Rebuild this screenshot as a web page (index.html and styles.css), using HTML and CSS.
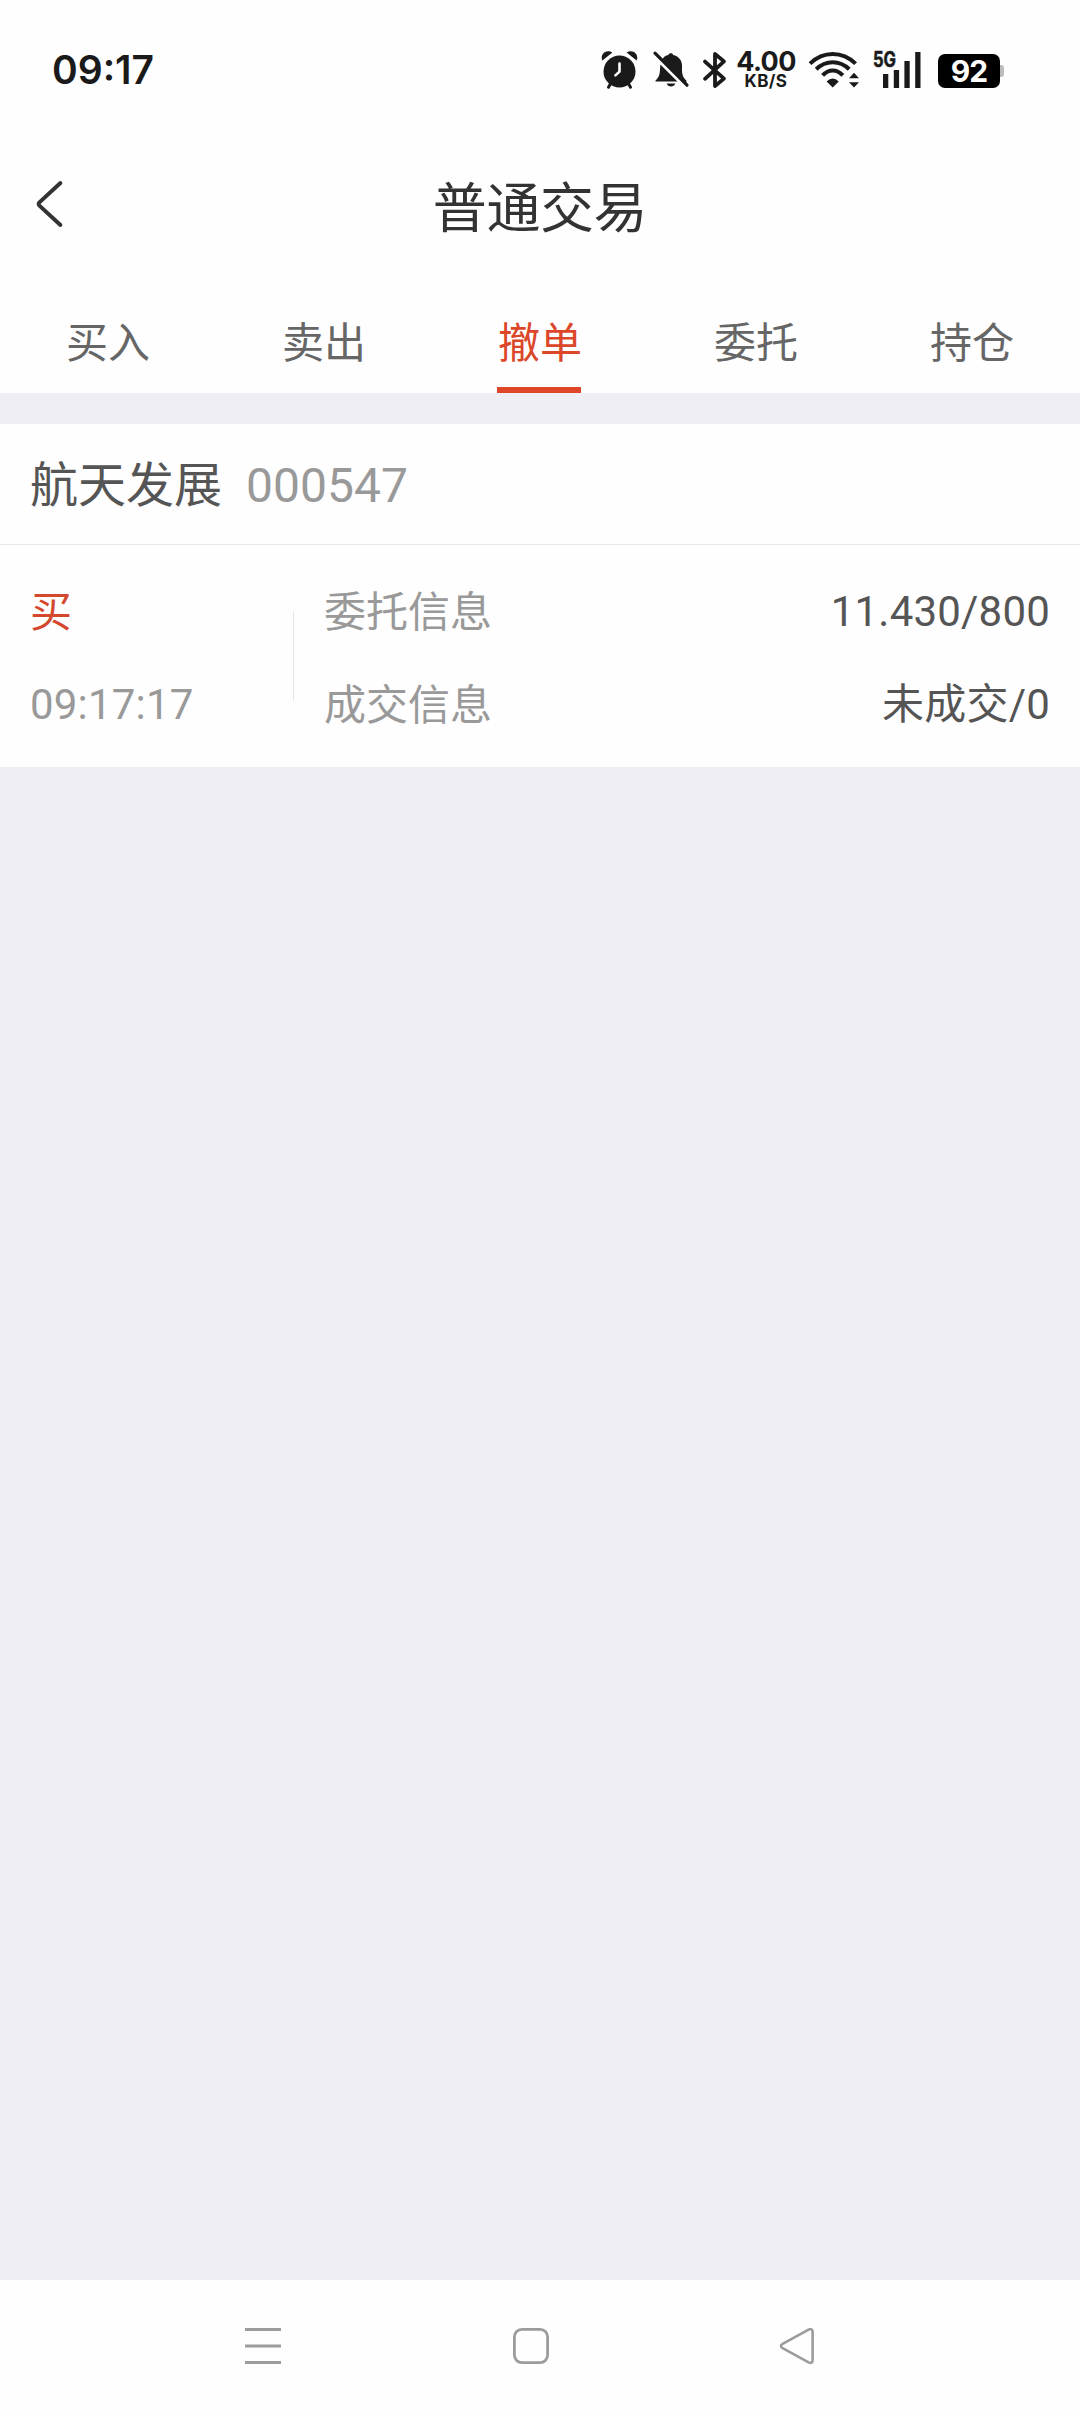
FILE: index.html
```html
<!DOCTYPE html>
<html lang="zh-CN">
<head>
<meta charset="utf-8">
<title>普通交易</title>
<link rel="stylesheet" href="styles.css">
</head>
<body>
<div class="screen">
  <div class="status">
    <div class="clock">09:17</div>
    <div class="indicators">
      <svg class="alarm" width="40" height="40" viewBox="0 0 40 40">
        <path d="M2.4 10.6C-.4 4.6 6-1.6 12.4 2.6ZM36.6 10.6C39.4 4.6 33-1.6 26.6 2.6Z" fill="#1a1a1a"/>
        <path d="M8.5 37.2 12 31M30.5 37.2 27 31" stroke="#1a1a1a" stroke-width="3" stroke-linecap="round"/>
        <circle cx="19.5" cy="21.5" r="16" fill="#1a1a1a"/>
        <path d="M19.5 13.6V21.6L15.4 25.4" fill="none" stroke="#fff" stroke-width="2.6" stroke-linecap="round" stroke-linejoin="round"/>
      </svg>
      <svg class="bell" width="42" height="40" viewBox="0 0 42 40">
        <path d="M14.6 6.6C15.8 5.8 17 5.3 18.4 5C18.8 2.7 22.8 2.7 23.2 5C28.4 6.2 32 10 32 15.5V19.5C32 25 33.2 27.5 36.4 30.6V33L12.4 9ZM10.4 14.6 27.4 31.6H5.5V30.6C8.6 27.5 9.8 25 10 19.5ZM16.6 33.6H25.4C24 37.6 18 37.6 16.6 33.6Z" fill="#1a1a1a"/>
        <path d="M5 3.2 37 35.2" stroke="#1a1a1a" stroke-width="3.2" stroke-linecap="round"/>
      </svg>
      <svg class="bluetooth" width="30" height="40" viewBox="0 0 30 40">
        <path d="M5 11.6 24 28.6 15 36V4L24 11.4 5 28.8" fill="none" stroke="#1a1a1a" stroke-width="3.8" stroke-linecap="round" stroke-linejoin="round"/>
      </svg>
      <div class="speed"><span class="rate">4.00</span><span class="unit">KB/S</span></div>
      <svg class="wifi" width="56" height="40" viewBox="0 0 56 40">
        <path d="M4 13.6Q14 4 26.7 4T49.6 13.6M10.2 19.2Q17.4 12.2 26.7 12.2T43.2 19.2M16.6 25.4Q21 20.4 26.7 20.4T36.8 25.4" fill="none" stroke="#1a1a1a" stroke-width="4"/>
        <path d="M20.6 31.4Q26.7 25.6 32.8 31.4L26.7 37.4ZM48 22.8 53 28.2H43ZM48 37.4 53 32.2H43Z" fill="#1a1a1a"/>
      </svg>
      <svg class="signal" width="50" height="40" viewBox="0 0 50 40">
        <text class="network" x="1" y="17" textLength="23" lengthAdjust="spacingAndGlyphs">5G</text>
        <path d="M11 24h5.3v14H11zM21.8 20h5.3v18h-5.3zM32.4 11h5.3v27h-5.3zM43.2 2h5.3v36h-5.3z" fill="#1a1a1a"/>
      </svg>
      <div class="battery"><span class="level">92</span><span class="nub"></span></div>
    </div>
  </div>

  <header class="titlebar">
    <svg class="back" width="32" height="52" viewBox="0 0 32 52">
      <path d="M27.4 5 6.4 24.4Q5 26 6.4 27.6L27.4 47" fill="none" stroke="#333" stroke-width="4" stroke-linecap="round" stroke-linejoin="round"/>
    </svg>
    <h1 class="title">普通交易</h1>
  </header>

  <nav class="tabs">
    <div class="tab">买入</div>
    <div class="tab">卖出</div>
    <div class="tab active">撤单</div>
    <div class="tab">委托</div>
    <div class="tab">持仓</div>
  </nav>

  <main class="content">
    <section class="order">
      <div class="stock"><span class="name">航天发展</span><span class="code">000547</span></div>
      <div class="detail">
        <div class="side">
          <div class="row buy">买</div>
          <div class="row time">09:17:17</div>
        </div>
        <div class="info">
          <div class="row"><span class="label">委托信息</span><span class="value">11.430/800</span></div>
          <div class="row"><span class="label">成交信息</span><span class="value">未成交/0</span></div>
        </div>
      </div>
    </section>
  </main>

  <footer class="sysnav">
    <svg width="40" height="40" viewBox="0 0 40 40"><path d="M2 3.5H38M2 20H38M2 36.5H38" stroke="#9c9c9c" stroke-width="3"/></svg>
    <svg width="40" height="40" viewBox="0 0 40 40"><rect x="3.4" y="3.4" width="33.2" height="33.2" rx="7.5" fill="none" stroke="#9c9c9c" stroke-width="2.8"/></svg>
    <svg width="40" height="40" viewBox="0 0 40 40"><path d="M3.6 17.8Q.4 20 3.6 22.2L29.6 36.4Q33.4 38 33.6 34.4V5.6Q33.4 2 29.6 3.6Z" fill="none" stroke="#9c9c9c" stroke-width="2.6" stroke-linejoin="round"/></svg>
  </footer>
</div>
</body>
</html>
```
FILE: styles.css
```css
* { box-sizing: border-box; }

body {
  margin: 0;
  background: #fff;
  font-family: Roboto, "Noto Sans CJK SC", sans-serif;
  color: #555;
}

svg { display: block; flex: none; }

.screen {
  width: 1080px;
  height: 2412px;
  display: flex;
  flex-direction: column;
  background: #fefefe;
}

/* System status bar */
.status {
  height: 140px;
  padding: 50px 76px 50px 52px;
  display: flex;
  justify-content: space-between;
  font-family: Inter, sans-serif;
  color: #1a1a1a;
}
.clock {
  font-size: 39px;
  line-height: 40px;
  font-weight: 600;
}
.indicators { display: flex; height: 40px; }
.bell { margin-left: 10px; }
.bluetooth { margin-left: 8px; }
.speed {
  width: 60px;
  margin-left: 6px;
  display: flex;
  flex-direction: column;
  align-items: center;
  white-space: nowrap;
}
.rate {
  font-size: 27px;
  line-height: 24px;
  font-weight: 700;
  letter-spacing: -0.6px;
}
.unit {
  font-size: 17px;
  line-height: 14px;
  font-weight: 700;
  letter-spacing: 0.4px;
}
.wifi { margin-left: 10px; }
.signal { margin-left: 10px; overflow: visible; }
.network {
  font-size: 21px;
  font-weight: 700;
  fill: #1a1a1a;
  stroke: #1a1a1a;
  stroke-width: 0.6px;
}
.battery {
  margin: 4px 0 0 16px;
  height: 34px;
  display: flex;
  align-items: center;
}
.level {
  width: 62px;
  height: 34px;
  border-radius: 7px;
  background: #000;
  color: #fff;
  font-size: 30px;
  line-height: 35px;
  font-weight: 700;
  text-align: center;
  letter-spacing: -1px;
}
.nub {
  width: 4px;
  height: 12px;
  border-radius: 0 3px 3px 0;
  background: #bbb;
}

/* Page heading */
.titlebar {
  height: 134px;
  padding: 0 33px;
  display: grid;
  grid-template-columns: 32px 1fr 32px;
  align-items: start;
}
.back { margin-top: 38px; }
.title {
  margin: 30px 0 0;
  font-size: 54px;
  line-height: 80px;
  font-weight: 400;
  color: #333;
  text-align: center;
  letter-spacing: -0.4px;
}

.tabs {
  height: 119px;
  display: grid;
  grid-template-columns: repeat(5, 1fr);
  justify-items: center;
}
.tab {
  height: 119px;
  padding-top: 38px;
  font-size: 42px;
  line-height: 64px;
  color: #666;
  white-space: nowrap;
}
.tab.active {
  width: 84px;
  margin-right: 2px;
  text-indent: 1px;
  color: #dc472a;
  border-bottom: 6px solid #df4628;
}

.content {
  flex: 1;
  padding-top: 31px;
  background: #efeef4;
}
.order { background: #fefefe; }
.stock {
  height: 121px;
  padding: 2px 30px 0;
  display: flex;
  gap: 24px;
  font-size: 48px;
  line-height: 118px;
  border-bottom: 1px solid #e8e8e8;
}
.name { padding-top: 1px; }
.code { padding-top: 1px; }
.code, .time, .label { color: #999; }
.detail {
  height: 222px;
  padding: 20px 30px 0;
  display: flex;
  font-size: 42px;
}
.side {
  width: 264px;
  height: 178px;
  background: linear-gradient(#e5e5e5, #e5e5e5) right 46px / 1px 90px no-repeat;
}
.info {
  flex: 1;
  padding-left: 30px;
}
.row {
  height: 93px;
  line-height: 93px;
  display: flex;
  justify-content: space-between;
}
.time, .value { letter-spacing: 0.2px; }
.label { padding-top: 1px; }
.buy {
  padding-top: 1px;
  color: #d4482e;
}

/* System navigation keys */
.sysnav {
  height: 132px;
  padding: 46px 261px 0 243px;
  display: flex;
  justify-content: space-between;
}
```
